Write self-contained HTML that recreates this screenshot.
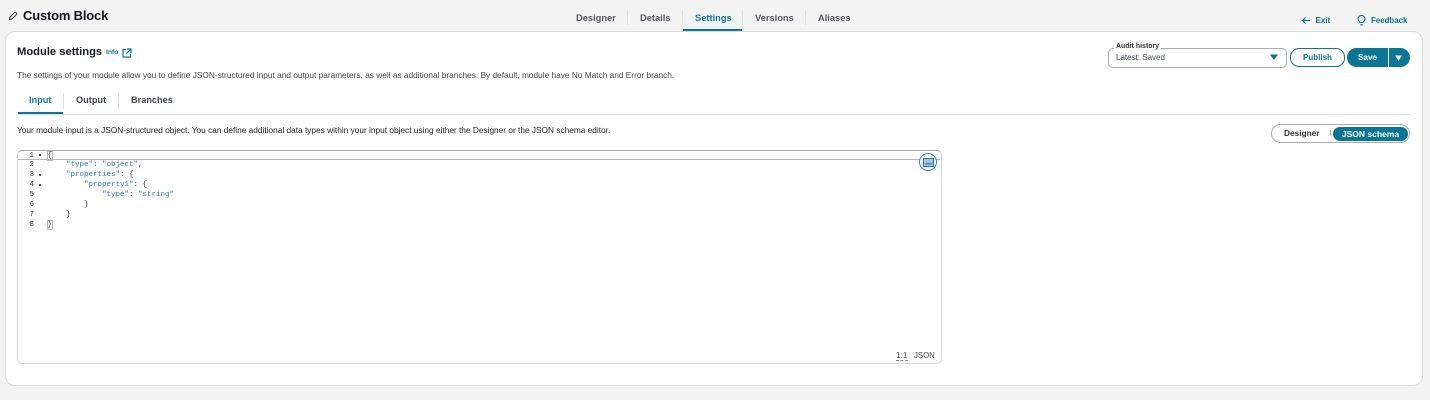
<!DOCTYPE html>
<html><head><meta charset="utf-8"><style>
html,body{margin:0;padding:0;width:1430px;height:400px;overflow:hidden;background:#f3f3f3}
body{position:relative;font-family:"Liberation Sans",sans-serif;color:#16191f}
.a{position:absolute;white-space:nowrap;line-height:1}
.b{font-weight:bold}
.sep{position:absolute;width:1px;background:#e0e0e0}
.m{font-family:"Liberation Mono",monospace;font-size:7.500px;line-height:10px;position:absolute;white-space:pre;color:#333}
.s{color:#2f7f86}.k{color:#2a7fa0}
.n{position:absolute;left:18px;width:16px;text-align:right;font-family:"Liberation Mono",monospace;font-size:7.500px;line-height:10px;color:#333}
</style></head><body>
<svg class="a" style="left:8px;top:11px" width="10" height="10" viewBox="0 0 10 10"><path d="M1.500 8.500l.5-2.500L6.500 1.500a1 1 0 0 1 1.500 0l.5.5a1 1 0 0 1 0 1.500L4 8z" fill="none" stroke="#444" stroke-width="1.100"/></svg>
<div class="a b" style="left:23px;top:9px;font-size:13px;letter-spacing:-.19px">Custom Block</div>

<div class="a b" style="left:576px;top:13.500px;font-size:9.300px;color:#545b64">Designer</div>
<div class="a b" style="left:640px;top:13.500px;font-size:9.300px;color:#545b64">Details</div>
<div class="a b" style="left:695px;top:13.500px;font-size:9.300px;color:#0f7a9b">Settings</div>
<div class="a b" style="left:755px;top:13.500px;font-size:9.300px;color:#545b64">Versions</div>
<div class="a b" style="left:818px;top:13.500px;font-size:9.300px;color:#545b64">Aliases</div>
<div class="sep" style="left:627px;top:10px;height:15px"></div>
<div class="sep" style="left:682px;top:10px;height:15px"></div>
<div class="sep" style="left:742px;top:10px;height:15px"></div>
<div class="sep" style="left:805px;top:10px;height:15px"></div>
<div class="a" style="left:683px;top:29px;width:59px;height:2px;background:#0b7595"></div>

<svg class="a" style="left:1301px;top:16px" width="10" height="9" viewBox="0 0 10 9"><path d="M9 4.500H1.500M4.500 1.500l-3 3 3 3" fill="none" stroke="#0b6f8f" stroke-width="1.200"/></svg>
<div class="a b" style="left:1315.500px;top:16.500px;font-size:8px;color:#0b6f8f">Exit</div>
<svg class="a" style="left:1357px;top:15px" width="9" height="11" viewBox="0 0 9 11"><path d="M3 7.500C2.500 6 1 5.500 1 3.800a3.500 3.300 0 0 1 7 0C8 5.500 6.500 6 6 7.500zM3.200 9.800h2.600" fill="none" stroke="#0b6f8f" stroke-width="1.100"/></svg>
<div class="a b" style="left:1371px;top:16.500px;font-size:7.900px;color:#0b6f8f">Feedback</div>

<div class="a" style="left:5px;top:31px;width:1416px;height:353px;background:#fff;border:1px solid #dcdcdc;border-radius:10px"></div>

<div class="a b" style="left:17px;top:46.500px;font-size:11.200px">Module settings</div>
<div class="a b" style="left:106px;top:50px;font-size:6.800px;color:#0b7a9b">Info</div>
<svg class="a" style="left:122px;top:48px" width="10" height="10" viewBox="0 0 10 10"><path d="M4 1.500H1V9h7.500V6M5 1h4v4M9 1L4.500 5.500" fill="none" stroke="#0b7a9b" stroke-width="1.200"/></svg>
<div class="a" style="left:17px;top:70.500px;font-size:8.300px;color:#444">The settings of your module allow you to define JSON-structured input and output parameters, as well as additional branches. By default, module have No Match and Error branch.</div>

<div class="a b" style="left:29px;top:96px;font-size:9.200px;color:#0f7a9b">Input</div>
<div class="a b" style="left:76px;top:96px;font-size:9.200px;color:#414750">Output</div>
<div class="a b" style="left:131px;top:96px;font-size:9.200px;color:#414750">Branches</div>
<div class="sep" style="left:63px;top:93px;height:16px"></div>
<div class="sep" style="left:118px;top:93px;height:16px"></div>
<div class="a" style="left:18px;top:114px;width:1392px;height:1px;background:#dcdfe2"></div>
<div class="a" style="left:18px;top:112px;width:45px;height:2px;background:#0b7595"></div>

<div class="a" style="left:17px;top:126px;font-size:8.300px;color:#222">Your module input is a JSON-structured object. You can define additional data types within your input object using either the Designer or the JSON schema editor.</div>

<div class="a" style="left:1108px;top:48px;width:177px;height:18px;border:1px solid #a9adb3;border-radius:5px;background:#fff"></div>
<div class="a b" style="left:1114px;top:43px;font-size:7px;background:#fff;padding:0 2px;color:#333">Audit history</div>
<div class="a" style="left:1116px;top:53.500px;font-size:8px;color:#414750">Latest: Saved</div>
<svg class="a" style="left:1270px;top:54px" width="8" height="6" viewBox="0 0 8 6"><path d="M1 1h6L4 5z" fill="#0b6f8f" stroke="#0b6f8f"/></svg>

<div class="a b" style="left:1290px;top:48px;width:53px;height:17px;border:1px solid #0b7595;border-radius:9px;background:#fff;color:#0b7595;font-size:8px;text-align:center;line-height:18px">Publish</div>
<div class="a b" style="left:1347px;top:48px;width:41px;height:19px;border-radius:10px 0 0 10px;background:#0b7595;color:#fff;font-size:8.200px;text-align:center;line-height:20px">Save</div>
<div class="a" style="left:1389px;top:48px;width:21px;height:19px;border-radius:0 10px 10px 0;background:#0b7595"></div>
<svg class="a" style="left:1395px;top:55px" width="7" height="6" viewBox="0 0 7 6"><path d="M1 1h5L3.500 5z" fill="#fff" stroke="#fff"/></svg>

<div class="a" style="left:1271px;top:124px;width:137px;height:17px;border:1px solid #a9adb3;border-radius:9.500px;background:#fff"></div>
<div class="a b" style="left:1284px;top:129px;font-size:8.300px;color:#333">Designer</div>
<div class="sep" style="left:1330px;top:130px;height:6px;background:#aaa"></div>
<div class="a b" style="left:1333px;top:126.500px;width:75px;height:14px;border-radius:7px;background:#0b7595;color:#fff;font-size:8.500px;text-align:center;line-height:14px">JSON schema</div>

<div class="a" style="left:17px;top:150px;width:923px;height:212px;border:1px solid #d5d7da;border-top:1px solid #a8a8b4;border-radius:5px;background:#fff"></div>
<div class="a" style="left:18px;top:159px;width:922px;height:1px;background:#b6b6c2"></div>

<div class="n" style="top:150.500px">1</div><div class="n" style="top:160px">2</div><div class="n" style="top:170px">3</div><div class="n" style="top:180px">4</div><div class="n" style="top:190px">5</div><div class="n" style="top:200px">6</div><div class="n" style="top:210px">7</div><div class="n" style="top:219.500px">8</div>
<div class="a" style="left:38.500px;top:154px;width:2px;height:2px;background:#555"></div>
<div class="a" style="left:38.500px;top:174px;width:2px;height:2px;background:#555"></div>
<div class="a" style="left:38.500px;top:184px;width:2px;height:2px;background:#555"></div>
<div class="a" style="left:47px;top:151px;width:4px;height:8px;border:1px solid #bbb"></div>
<div class="a" style="left:47px;top:220px;width:4px;height:8px;border:1px solid #bbb"></div>
<div class="m" style="left:47.500px;top:150.500px">{</div>
<div class="m" style="left:66px;top:160px"><span class="k">"type"</span>: <span class="s">"object"</span>,</div>
<div class="m" style="left:66px;top:170px"><span class="k">"properties"</span>: {</div>
<div class="m" style="left:84px;top:180px"><span class="k">"property1"</span>: {</div>
<div class="m" style="left:102px;top:190px"><span class="k">"type"</span>: <span class="s">"string"</span></div>
<div class="m" style="left:84px;top:200px">}</div>
<div class="m" style="left:66px;top:210px">}</div>
<div class="m" style="left:47.500px;top:219.500px">}</div>

<div class="a" style="left:919px;top:153px;width:16px;height:16px;border:1.500px solid #2b86e0;border-radius:50%;background:#fff"></div>
<svg class="a" style="left:923px;top:158px" width="11" height="9" viewBox="0 0 11 9"><rect x=".5" y=".5" width="10" height="8" fill="#9fc4e8" stroke="#2b6fae"/><path d="M2.500 5.800h6" stroke="#1f5f9e"/></svg>

<div class="a" style="left:896px;top:351.500px;font-size:8.200px;color:#444">1:1</div>
<div class="a" style="left:896px;top:360px;width:12px;border-top:1px dashed #888"></div>
<div class="a" style="left:914px;top:351.500px;font-size:7.800px;color:#444">JSON</div>
</body></html>
